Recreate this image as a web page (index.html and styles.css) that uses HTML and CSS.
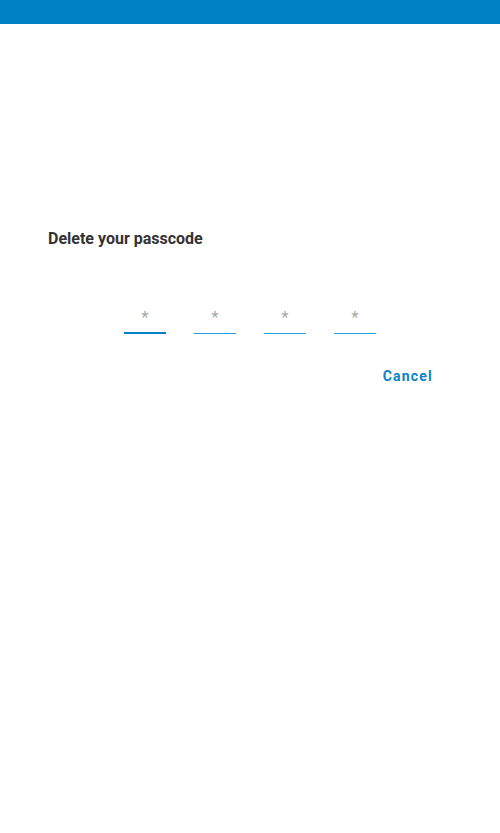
FILE: index.html
```html
<!DOCTYPE html>
<html>
<head>
<meta charset="utf-8">
<link rel="stylesheet" href="styles.css">
</head>
<body>
<div class="appbar"></div>
<main class="content">
  <h1 class="title">Delete your passcode</h1>
  <div class="pins">
    <div class="pin pin-active"><span class="star">*</span></div>
    <div class="pin"><span class="star">*</span></div>
    <div class="pin"><span class="star">*</span></div>
    <div class="pin"><span class="star">*</span></div>
  </div>
  <div class="actions">
    <button class="btn-cancel">Cancel</button>
  </div>
</main>
</body>
</html>
```
FILE: styles.css
```css
html, body {
  margin: 0;
  padding: 0;
  background: #ffffff;
  font-family: Roboto, "Noto Sans", sans-serif;
}
.appbar {
  height: 24px;
  background: #0081c6;
}
.content {
  padding: 205px 67px 0 48px;
}
.title {
  margin: 0;
  font-size: 16px;
  font-weight: 700;
  color: #333333;
  line-height: 20px;
}
.pins {
  display: flex;
  justify-content: center;
  gap: 28px;
  margin-top: 57px;
  padding-left: 19px;
}
.pin {
  width: 42px;
  height: 27px;
  border-bottom: 1px solid #1e9fe6;
  display: flex;
  justify-content: center;
  align-items: flex-start;
}
.pin-active {
  border-bottom: 2px solid #0081c6;
  height: 26px;
}
.star {
  font-size: 17px;
  line-height: 21px;
  padding-top: 1px;
  color: #aaaaaa;
}
.actions {
  display: flex;
  justify-content: flex-end;
  margin-top: 32px;
}
.btn-cancel {
  background: none;
  border: none;
  padding: 0;
  font-family: Roboto, sans-serif;
  font-size: 14px;
  font-weight: 700;
  letter-spacing: 1.2px;
  color: #0a84c8;
  line-height: 20px;
}
```
